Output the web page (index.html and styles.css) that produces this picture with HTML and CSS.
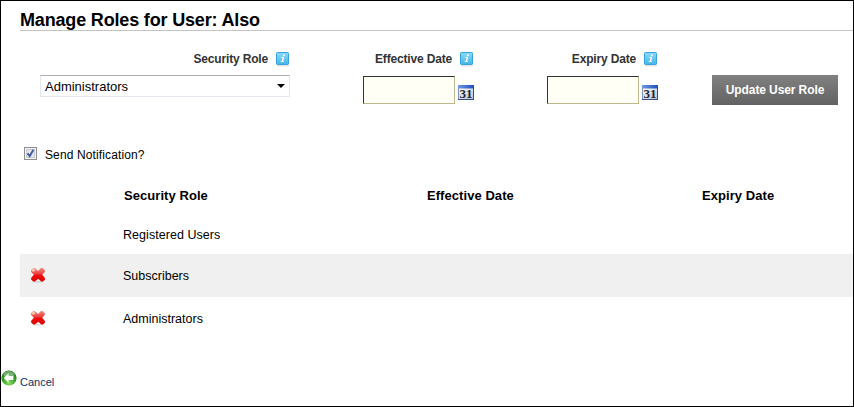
FILE: index.html
```html
<!DOCTYPE html>
<html lang="en">
<head>
<meta charset="utf-8">
<title>Manage Roles</title>
<link rel="stylesheet" href="styles.css">
</head>
<body>
<svg class="defs" aria-hidden="true">
  <defs>
    <linearGradient id="blue" x1="0" y1="0" x2="0" y2="1"><stop offset="0" stop-color="#8fd9f6"/><stop offset="1" stop-color="#43b5ea"/></linearGradient>
    <linearGradient id="red" x1="0" y1="0" x2="0" y2="1"><stop offset="0" stop-color="#f58a80"/><stop offset=".4" stop-color="#ee4444"/><stop offset=".55" stop-color="#f00c0c"/><stop offset="1" stop-color="#dc0000"/></linearGradient>
    <linearGradient id="calbar" x1="0" y1="0" x2="1" y2="0"><stop offset="0" stop-color="#6f9bea"/><stop offset="1" stop-color="#1f4dbb"/></linearGradient>
    <linearGradient id="calpage" x1="0" y1="0" x2="1" y2="1"><stop offset="0" stop-color="#fff"/><stop offset="1" stop-color="#b9c6dd"/></linearGradient>
    <radialGradient id="green" cx=".5" cy=".85" r=".85"><stop offset="0" stop-color="#8ae05a"/><stop offset=".5" stop-color="#36a02c"/><stop offset="1" stop-color="#16701a"/></radialGradient>
    <symbol id="info" viewBox="0 0 14 15">
      <rect x="1" y="13" width="12" height="1.4" fill="#dfe3e6"/>
      <rect x=".5" y=".5" width="12" height="12" rx=".8" fill="url(#blue)" stroke="#36a4dc"/>
      <path d="M7.2 2.6h1.7l-.4 1.6H6.8zM5.4 5.1h2.8l-1.1 4h1l-.3 1H4.6l.3-1h.8l.8-3H5.2z" fill="#fff"/>
    </symbol>
    <symbol id="cal" viewBox="0 0 16 15">
      <rect width="16" height="15" fill="#7f92bb"/>
      <rect x="1" y="3" width="14" height="11" fill="url(#calpage)"/>
      <rect width="16" height="3.5" fill="url(#calbar)"/>
      <path d="M1 6.5h14M1 9.5h14M1 12.5h14" stroke="#c3cde0" stroke-width=".6"/>
      <path d="M15.5 1v14M0 14.5h16" stroke="#394d80"/>
      <text x="8" y="13.3" text-anchor="middle" class="day">31</text>
    </symbol>
    <symbol id="cross" viewBox="0 0 16 16">
      <ellipse cx="8" cy="14.8" rx="6" ry=".8" fill="#777" opacity=".25"/>
      <path d="M3.2.9 5 1.2 8 4 11 1.1 12.6.9 15 3.4 14.7 5 12.2 7.8 14.9 11 15.1 12.4 13 14.6 11.3 14.4 8.2 11.7 5 14.5 3.4 14.6 1.1 12.4 1.2 10.8 3.9 7.8 1.2 5 .9 3.5z" fill="url(#red)"/>
      <path d="M3.3 1.2 5.5 3.2 3.4 5 1.3 3.4z" fill="#ffe6c8" opacity=".8"/>
    </symbol>
    <symbol id="back" viewBox="0 0 16 16">
      <circle cx="8" cy="8" r="7.6" fill="url(#green)"/>
      <ellipse cx="8" cy="4.4" rx="5.4" ry="3.5" fill="#fff" opacity=".35"/>
      <path d="M2.7 8 7.6 3.3v2.8h4.8v3.8H7.6v2.8z" fill="#fff"/>
    </symbol>
  </defs>
</svg>
<main class="page">
  <h1 class="title">Manage Roles for User: Also</h1>
  <form class="role-form">
    <div class="field">
      <div class="label"><span>Security Role</span><svg class="info"><use href="#info"/></svg></div>
      <div class="select"><span>Administrators</span><svg class="arrow" viewBox="0 0 8 4"><path d="M0 0h8L4 4z"/></svg></div>
    </div>
    <div class="field">
      <div class="label"><span>Effective Date</span><svg class="info"><use href="#info"/></svg></div>
      <div class="date"><span class="input"></span><svg class="cal"><use href="#cal"/></svg></div>
    </div>
    <div class="field">
      <div class="label"><span>Expiry Date</span><svg class="info"><use href="#info"/></svg></div>
      <div class="date"><span class="input"></span><svg class="cal"><use href="#cal"/></svg></div>
    </div>
    <button type="button" class="update">Update User Role</button>
  </form>
  <div class="notify">
    <svg class="check" viewBox="0 0 13 13"><rect x=".5" y=".5" width="12" height="12" fill="#f4f4f4" stroke="#8e8f8f"/><rect x="2.5" y="2.5" width="8" height="8" fill="#e3e6ea" stroke="#c5c9d0"/><path d="M3.5 6.3 5.7 9 9.4 2.8" fill="none" stroke="#44599a" stroke-width="1.9"/></svg>
    <span>Send Notification?</span>
  </div>
  <div class="table">
    <div class="row head"><span></span><span class="th">Security Role</span><span>Effective Date</span><span>Expiry Date</span></div>
    <div class="row first"><span></span><span>Registered Users</span></div>
    <div class="row alt"><svg class="cross"><use href="#cross"/></svg><span>Subscribers</span></div>
    <div class="row"><svg class="cross"><use href="#cross"/></svg><span>Administrators</span></div>
  </div>
  <div class="cancel"><svg class="back"><use href="#back"/></svg><span>Cancel</span></div>
</main>
</body>
</html>
```
FILE: styles.css
```css
* { box-sizing: border-box; }
body { margin: 0; background: #fff; font-family: "Liberation Sans", Arial, sans-serif; font-size: 12px; color: #000; }
svg { display: block; flex: none; }
.defs { position: absolute; width: 0; height: 0; }
.page { width: 854px; height: 407px; border: 1px solid #000; overflow: hidden; }
.title { margin: 0 0 0 19px; padding-top: 9px; height: 30px; border-bottom: 1px solid #c4c4c4; font-size: 18px; line-height: 20px; font-weight: bold; letter-spacing: -.17px; white-space: nowrap; }
.role-form { display: grid; grid-template-columns: 250px 111px 111px 126px; column-gap: 73px; padding: 20px 0 0 39px; height: 115px; }
.label { display: flex; justify-content: flex-end; gap: 8px; height: 16px; line-height: 16px; font-weight: bold; letter-spacing: -.17px; color: #333; white-space: nowrap; }
.info { width: 14px; height: 15px; margin-top: 1px; }
.select { display: flex; align-items: center; justify-content: space-between; height: 22px; margin-top: 8px; padding: 0 4px; border: 1px solid #e3e5ef; border-top-color: #abadb3; font-size: 13px; }
.arrow { width: 8px; height: 4px; }
.date { display: flex; gap: 3px; margin-top: 9px; }
.input { width: 92px; height: 28px; background: #fffff5; border: 1px solid #333; border-right-color: #bdb88c; border-bottom-color: #bdb88c; }
.cal { width: 16px; height: 15px; margin-top: 9px; }
.day { font: bold 13px "Liberation Serif", serif; fill: #222733; }
.update { width: 126px; height: 30px; margin: 24px 0 0 -19px; padding: 0; border: 0; background: linear-gradient(#818181, #626262); color: #fff; font: bold 12px/30px "Liberation Sans", Arial, sans-serif; letter-spacing: -.1px; }
.notify { display: flex; align-items: center; gap: 8px; height: 16px; margin-left: 23px; letter-spacing: .12px; }
.check { width: 13px; height: 13px; margin-top: -1px; }
.notify span { padding-top: 1px; }
.table { margin: 19px 0 0 19px; }
.row { display: grid; grid-template-columns: 103px 304px 275px 1fr; align-items: center; height: 43px; font-size: 12.5px; }
.head { height: 29px; font-size: 13px; font-weight: bold; letter-spacing: .06px; }
.th { padding-left: 1px; }
.first { height: 40px; margin-top: 4px; padding-top: 2px; letter-spacing: .05px; }
.alt { background: #f0f0f0; }
.cross { width: 16px; height: 16px; margin: -2px 0 0 10px; }
.cancel { display: flex; align-items: flex-start; gap: 3px; margin-top: 30px; font-size: 11px; color: #003366; }
.back { width: 16px; height: 16px; }
.cancel span { margin-top: 6px; line-height: 12px; }
```
